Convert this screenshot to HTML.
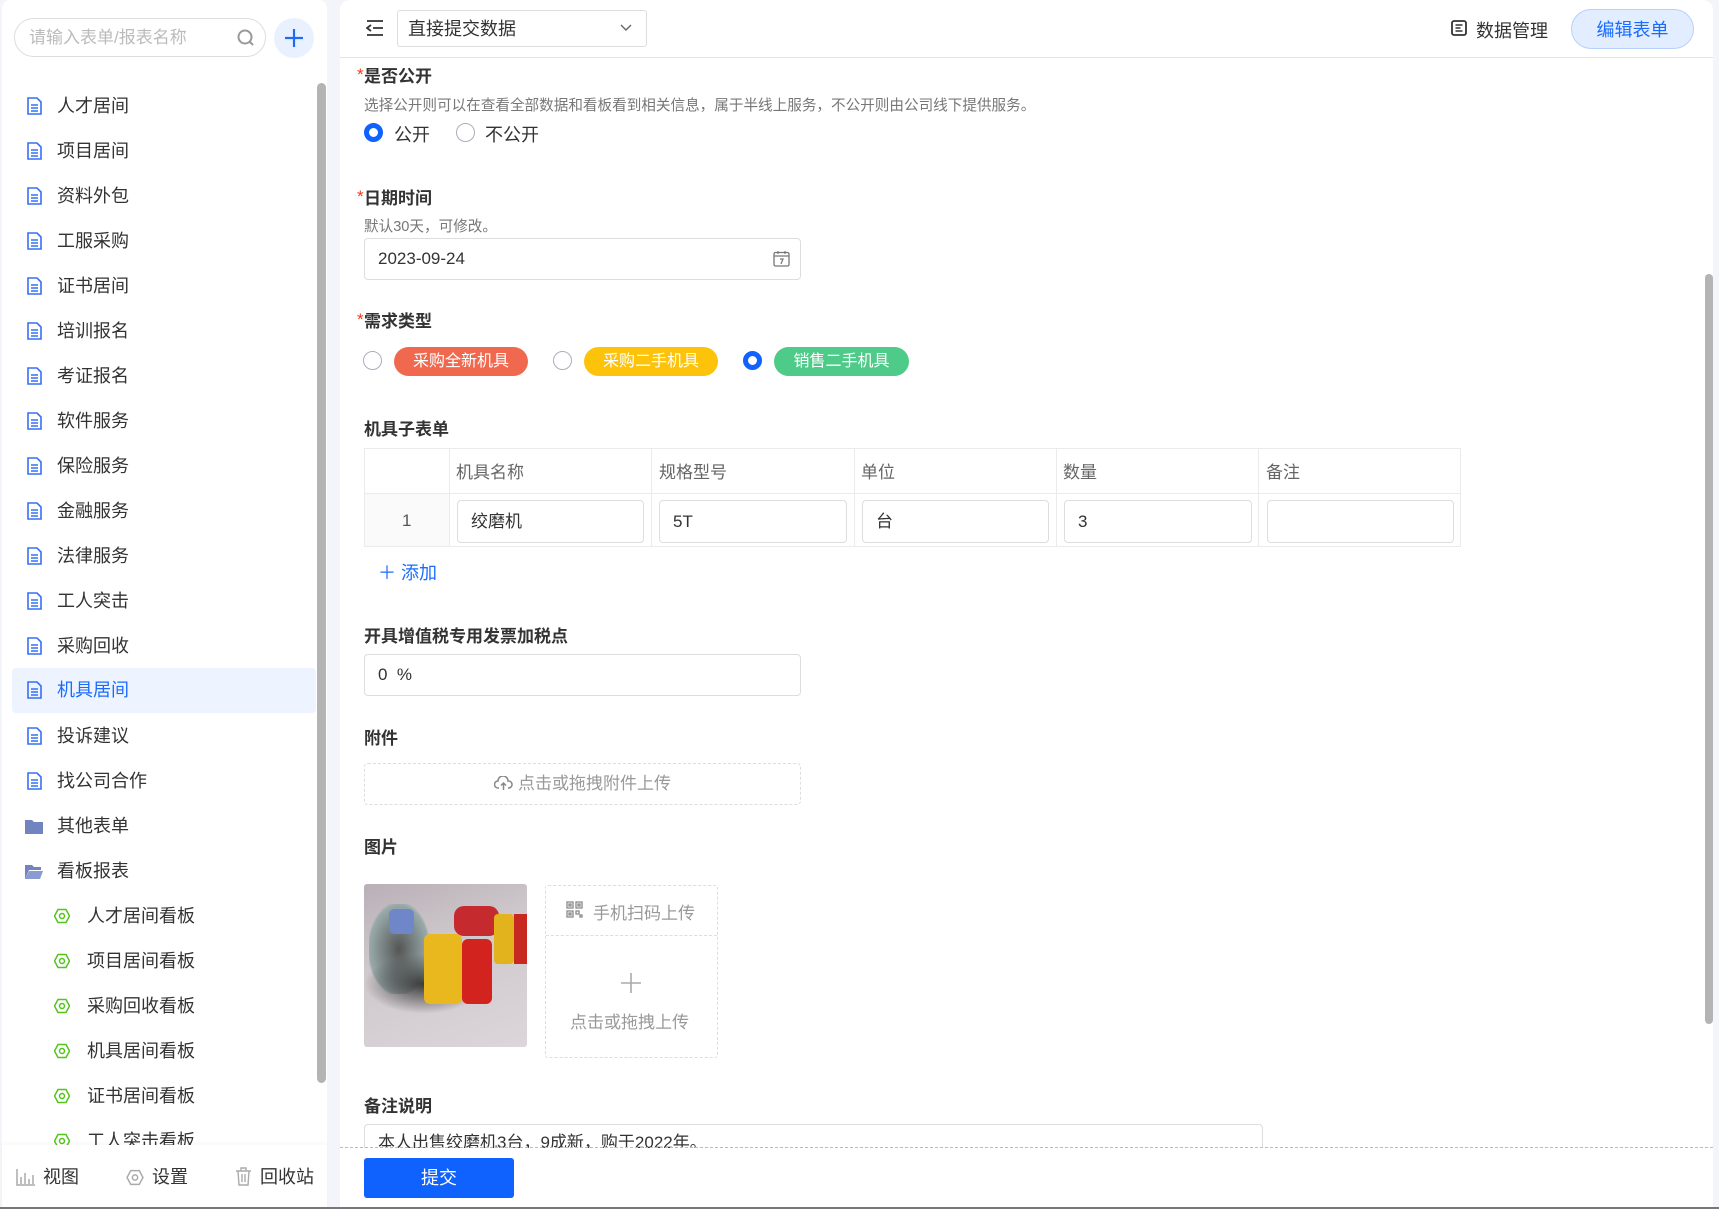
<!DOCTYPE html>
<html><head><meta charset="utf-8"><style>
*{box-sizing:border-box;margin:0;padding:0}
body{width:1719px;height:1209px;overflow:hidden;background:#f4f5fa;font-family:"Liberation Sans","Noto Sans CJK SC",sans-serif;color:#333;position:relative}
.a{position:absolute}
.side{left:2px;top:0;width:325px;height:1209px;background:#fff;border-radius:8px}
.mi{position:absolute;left:12px;width:304px;height:45px;font-size:18px;line-height:45px;color:#333}
.mi .t{position:absolute;left:45px}
.mi svg{position:absolute;left:15px;top:13px}
.sub .t{left:75px}.sub svg{left:42px;top:14px}
.main{left:340px;top:0;width:1373px;height:1209px;background:#fff;border-radius:10px 10px 0 0}
.lbl{position:absolute;left:364px;font-size:17px;font-weight:bold;color:#333;line-height:20px}
.lbl i{color:#f03a17;font-style:normal;font-weight:normal;position:absolute;left:-7px;top:-2px}
.inp{position:absolute;border:1px solid #ddd;border-radius:4px;background:#fff;font-size:17px;color:#333}
.radio{position:absolute;width:19px;height:19px;border:1.5px solid #a9aebd;border-radius:50%;background:#fff}
.radio.on{border:5px solid #0f62fe}
.tag{position:absolute;height:29px;border-radius:15px;color:#fff;font-size:16px;line-height:29px;text-align:center}
.th{position:absolute;top:448px;height:45px;line-height:45px;font-size:17px;color:#666;padding-left:14px}
.cell{position:absolute;top:500px;height:43px;line-height:41px;padding-left:13px}
</style></head><body>
<div class="a side"></div>
<div class="a" style="left:14px;top:18px;width:252px;height:39px;border:1px solid #ddd;border-radius:20px;font-size:17px;line-height:37px;color:#bbb;padding-left:14px">请输入表单/报表名称</div>
<svg class="a" style="left:236px;top:28px" width="20" height="20" viewBox="0 0 20 20"><circle cx="9" cy="9" r="6.5" fill="none" stroke="#999" stroke-width="2"/><path d="M14 14l3 3" stroke="#999" stroke-width="2"/></svg>
<div class="a" style="left:274px;top:18px;width:40px;height:40px;border-radius:50%;background:#eaf1fe"></div>
<svg class="a" style="left:284px;top:28px" width="20" height="20"><path d="M10 1v18M1 10h18" stroke="#1a6cff" stroke-width="2.2"/></svg>
<div class="a" style="left:317px;top:83px;width:9px;height:1000px;background:#b4b4b4;border-radius:5px"></div>

<div class="mi" style="top:84px"><svg width="15" height="18" viewBox="0 0 15 18"><path d="M1 1h9l4 4v12H1z" fill="none" stroke="#3670f6" stroke-width="1.6"/><path d="M4 8h7M4 11h7M4 14h7" stroke="#3670f6" stroke-width="1.4"/></svg><span class="t">人才居间</span></div>
<div class="mi" style="top:129px"><svg width="15" height="18" viewBox="0 0 15 18"><path d="M1 1h9l4 4v12H1z" fill="none" stroke="#3670f6" stroke-width="1.6"/><path d="M4 8h7M4 11h7M4 14h7" stroke="#3670f6" stroke-width="1.4"/></svg><span class="t">项目居间</span></div>
<div class="mi" style="top:174px"><svg width="15" height="18" viewBox="0 0 15 18"><path d="M1 1h9l4 4v12H1z" fill="none" stroke="#3670f6" stroke-width="1.6"/><path d="M4 8h7M4 11h7M4 14h7" stroke="#3670f6" stroke-width="1.4"/></svg><span class="t">资料外包</span></div>
<div class="mi" style="top:219px"><svg width="15" height="18" viewBox="0 0 15 18"><path d="M1 1h9l4 4v12H1z" fill="none" stroke="#3670f6" stroke-width="1.6"/><path d="M4 8h7M4 11h7M4 14h7" stroke="#3670f6" stroke-width="1.4"/></svg><span class="t">工服采购</span></div>
<div class="mi" style="top:264px"><svg width="15" height="18" viewBox="0 0 15 18"><path d="M1 1h9l4 4v12H1z" fill="none" stroke="#3670f6" stroke-width="1.6"/><path d="M4 8h7M4 11h7M4 14h7" stroke="#3670f6" stroke-width="1.4"/></svg><span class="t">证书居间</span></div>
<div class="mi" style="top:309px"><svg width="15" height="18" viewBox="0 0 15 18"><path d="M1 1h9l4 4v12H1z" fill="none" stroke="#3670f6" stroke-width="1.6"/><path d="M4 8h7M4 11h7M4 14h7" stroke="#3670f6" stroke-width="1.4"/></svg><span class="t">培训报名</span></div>
<div class="mi" style="top:354px"><svg width="15" height="18" viewBox="0 0 15 18"><path d="M1 1h9l4 4v12H1z" fill="none" stroke="#3670f6" stroke-width="1.6"/><path d="M4 8h7M4 11h7M4 14h7" stroke="#3670f6" stroke-width="1.4"/></svg><span class="t">考证报名</span></div>
<div class="mi" style="top:399px"><svg width="15" height="18" viewBox="0 0 15 18"><path d="M1 1h9l4 4v12H1z" fill="none" stroke="#3670f6" stroke-width="1.6"/><path d="M4 8h7M4 11h7M4 14h7" stroke="#3670f6" stroke-width="1.4"/></svg><span class="t">软件服务</span></div>
<div class="mi" style="top:444px"><svg width="15" height="18" viewBox="0 0 15 18"><path d="M1 1h9l4 4v12H1z" fill="none" stroke="#3670f6" stroke-width="1.6"/><path d="M4 8h7M4 11h7M4 14h7" stroke="#3670f6" stroke-width="1.4"/></svg><span class="t">保险服务</span></div>
<div class="mi" style="top:489px"><svg width="15" height="18" viewBox="0 0 15 18"><path d="M1 1h9l4 4v12H1z" fill="none" stroke="#3670f6" stroke-width="1.6"/><path d="M4 8h7M4 11h7M4 14h7" stroke="#3670f6" stroke-width="1.4"/></svg><span class="t">金融服务</span></div>
<div class="mi" style="top:534px"><svg width="15" height="18" viewBox="0 0 15 18"><path d="M1 1h9l4 4v12H1z" fill="none" stroke="#3670f6" stroke-width="1.6"/><path d="M4 8h7M4 11h7M4 14h7" stroke="#3670f6" stroke-width="1.4"/></svg><span class="t">法律服务</span></div>
<div class="mi" style="top:579px"><svg width="15" height="18" viewBox="0 0 15 18"><path d="M1 1h9l4 4v12H1z" fill="none" stroke="#3670f6" stroke-width="1.6"/><path d="M4 8h7M4 11h7M4 14h7" stroke="#3670f6" stroke-width="1.4"/></svg><span class="t">工人突击</span></div>
<div class="mi" style="top:624px"><svg width="15" height="18" viewBox="0 0 15 18"><path d="M1 1h9l4 4v12H1z" fill="none" stroke="#3670f6" stroke-width="1.6"/><path d="M4 8h7M4 11h7M4 14h7" stroke="#3670f6" stroke-width="1.4"/></svg><span class="t">采购回收</span></div>
<div class="mi" style="top:668px;background:#eef4ff;border-radius:4px;color:#1a6cff"><svg width="15" height="18" viewBox="0 0 15 18"><path d="M1 1h9l4 4v12H1z" fill="none" stroke="#3670f6" stroke-width="1.6"/><path d="M4 8h7M4 11h7M4 14h7" stroke="#3670f6" stroke-width="1.4"/></svg><span class="t">机具居间</span></div>
<div class="mi" style="top:714px"><svg width="15" height="18" viewBox="0 0 15 18"><path d="M1 1h9l4 4v12H1z" fill="none" stroke="#3670f6" stroke-width="1.6"/><path d="M4 8h7M4 11h7M4 14h7" stroke="#3670f6" stroke-width="1.4"/></svg><span class="t">投诉建议</span></div>
<div class="mi" style="top:759px"><svg width="15" height="18" viewBox="0 0 15 18"><path d="M1 1h9l4 4v12H1z" fill="none" stroke="#3670f6" stroke-width="1.6"/><path d="M4 8h7M4 11h7M4 14h7" stroke="#3670f6" stroke-width="1.4"/></svg><span class="t">找公司合作</span></div>
<div class="mi" style="top:804px"><svg width="18" height="16" viewBox="0 0 18 16" style="left:13px;top:15px"><path d="M0 1h7l2 2h9v12H0z" fill="#7284c0"/></svg><span class="t">其他表单</span></div>
<div class="mi" style="top:849px"><svg width="18" height="16" viewBox="0 0 18 16" style="left:13px;top:15px"><path d="M0 1h7l2 2h7v3H4L0 15z" fill="#7284c0"/><path d="M4 7h14l-3 8H0z" fill="#8b9ad0"/></svg><span class="t">看板报表</span></div>
<div class="mi sub" style="top:894px"><svg width="16" height="16" viewBox="0 0 16 16"><path d="M4 1.5h8l3.5 6.5-3.5 6.5H4L0.5 8z" fill="none" stroke="#52c41a" stroke-width="1.5"/><circle cx="8" cy="8" r="2.5" fill="none" stroke="#52c41a" stroke-width="1.5"/></svg><span class="t">人才居间看板</span></div>
<div class="mi sub" style="top:939px"><svg width="16" height="16" viewBox="0 0 16 16"><path d="M4 1.5h8l3.5 6.5-3.5 6.5H4L0.5 8z" fill="none" stroke="#52c41a" stroke-width="1.5"/><circle cx="8" cy="8" r="2.5" fill="none" stroke="#52c41a" stroke-width="1.5"/></svg><span class="t">项目居间看板</span></div>
<div class="mi sub" style="top:984px"><svg width="16" height="16" viewBox="0 0 16 16"><path d="M4 1.5h8l3.5 6.5-3.5 6.5H4L0.5 8z" fill="none" stroke="#52c41a" stroke-width="1.5"/><circle cx="8" cy="8" r="2.5" fill="none" stroke="#52c41a" stroke-width="1.5"/></svg><span class="t">采购回收看板</span></div>
<div class="mi sub" style="top:1029px"><svg width="16" height="16" viewBox="0 0 16 16"><path d="M4 1.5h8l3.5 6.5-3.5 6.5H4L0.5 8z" fill="none" stroke="#52c41a" stroke-width="1.5"/><circle cx="8" cy="8" r="2.5" fill="none" stroke="#52c41a" stroke-width="1.5"/></svg><span class="t">机具居间看板</span></div>
<div class="mi sub" style="top:1074px"><svg width="16" height="16" viewBox="0 0 16 16"><path d="M4 1.5h8l3.5 6.5-3.5 6.5H4L0.5 8z" fill="none" stroke="#52c41a" stroke-width="1.5"/><circle cx="8" cy="8" r="2.5" fill="none" stroke="#52c41a" stroke-width="1.5"/></svg><span class="t">证书居间看板</span></div>
<div class="mi sub" style="top:1119px"><svg width="16" height="16" viewBox="0 0 16 16"><path d="M4 1.5h8l3.5 6.5-3.5 6.5H4L0.5 8z" fill="none" stroke="#52c41a" stroke-width="1.5"/><circle cx="8" cy="8" r="2.5" fill="none" stroke="#52c41a" stroke-width="1.5"/></svg><span class="t">工人突击看板</span></div>
<div class="a" style="left:2px;top:1145px;width:325px;height:64px;background:#fff;font-size:18px;line-height:64px;box-shadow:0 -2px 4px rgba(0,0,0,0.03)">
<svg class="a" style="left:14px;top:24px" width="19" height="17"><path d="M1 0v16h18M5 8v7M9 4v11M13 10v5M17 6v9" stroke="#aaa" stroke-width="1.5" fill="none"/></svg><span class="a" style="left:41px;top:0">视图</span>
<svg class="a" style="left:124px;top:24px" width="18" height="17" viewBox="0 0 16 16"><path d="M4 1.5h8l3.5 6.5-3.5 6.5H4L0.5 8z" fill="none" stroke="#aaa" stroke-width="1.4"/><circle cx="8" cy="8" r="2.5" fill="none" stroke="#aaa" stroke-width="1.4"/></svg><span class="a" style="left:150px;top:0">设置</span>
<svg class="a" style="left:233px;top:22px" width="17" height="19"><path d="M1 4h15M6 4V1h5v3M3 4l1 14h9l1-14M7 7v8M10 7v8" stroke="#aaa" stroke-width="1.4" fill="none"/></svg><span class="a" style="left:258px;top:0">回收站</span>
</div>

<div class="a main"></div>
<div class="a" style="left:340px;top:57px;width:1373px;height:1px;background:#e3e3e3"></div>
<svg class="a" style="left:366px;top:19px" width="18" height="18"><path d="M1 2h16M7 9h10M1 16h16M5 6l-4 3 4 3" stroke="#333" stroke-width="1.8" fill="none"/></svg>
<div class="a" style="left:397px;top:10px;width:250px;height:37px;border:1px solid #ddd;border-radius:3px;font-size:18px;line-height:37px;padding-left:10px;color:#333">直接提交数据</div>
<svg class="a" style="left:620px;top:24px" width="12" height="8"><path d="M1 1l5 5 5-5" stroke="#666" stroke-width="1.4" fill="none"/></svg>
<svg class="a" style="left:1451px;top:20px" width="16" height="16"><rect x="1" y="1" width="14" height="14" rx="2" fill="none" stroke="#333" stroke-width="1.8"/><path d="M4.5 5h7M4.5 8h5M4.5 11h7" stroke="#333" stroke-width="1.5"/></svg>
<div class="a" style="left:1476px;top:17px;font-size:18px;color:#333">数据管理</div>
<div class="a" style="left:1571px;top:9px;width:123px;height:40px;border:1px solid #b7d0fb;background:#e2edff;border-radius:20px;color:#1a6cff;font-size:18px;line-height:40px;text-align:center">编辑表单</div>

<div class="lbl" style="top:67px"><i>*</i>是否公开</div>
<div class="a" style="left:364px;top:94px;font-size:14.6px;color:#777">选择公开则可以在查看全部数据和看板看到相关信息，属于半线上服务，不公开则由公司线下提供服务。</div>
<div class="radio on" style="left:364px;top:123px"></div><div class="a" style="left:394px;top:121px;font-size:18px">公开</div>
<div class="radio" style="left:456px;top:123px"></div><div class="a" style="left:485px;top:121px;font-size:18px">不公开</div>

<div class="lbl" style="top:189px"><i>*</i>日期时间</div>
<div class="a" style="left:364px;top:215px;font-size:14.6px;color:#777">默认30天，可修改。</div>
<div class="inp" style="left:364px;top:238px;width:437px;height:42px;line-height:40px;padding-left:13px">2023-09-24</div>
<svg class="a" style="left:773px;top:250px" width="17" height="17"><rect x="1" y="2.5" width="15" height="13.5" rx="1.5" fill="none" stroke="#777" stroke-width="1.3"/><path d="M1 6h15M5 1v3M12 1v3M7 9h3l-2 5" stroke="#777" stroke-width="1.2" fill="none"/></svg>

<div class="lbl" style="top:312px"><i>*</i>需求类型</div>
<div class="radio" style="left:363px;top:351px"></div>
<div class="tag" style="left:394px;top:347px;width:134px;background:#f0694e">采购全新机具</div>
<div class="radio" style="left:553px;top:351px"></div>
<div class="tag" style="left:584px;top:347px;width:134px;background:#fcc30a">采购二手机具</div>
<div class="radio on" style="left:743px;top:351px"></div>
<div class="tag" style="left:774px;top:347px;width:135px;background:#4ecb88">销售二手机具</div>

<div class="lbl" style="top:420px">机具子表单</div>
<div class="a" style="left:364px;top:448px;width:1097px;height:99px;border:1px solid #ebebeb"></div>
<div class="a" style="left:365px;top:493px;width:84px;height:53px;background:#fafafa"></div>
<div class="a" style="left:364px;top:493px;width:1097px;height:1px;background:#ebebeb"></div>
<div class="a" style="left:449px;top:448px;width:1px;height:99px;background:#ebebeb"></div>
<div class="a" style="left:651px;top:448px;width:1px;height:99px;background:#ebebeb"></div>
<div class="a" style="left:854px;top:448px;width:1px;height:99px;background:#ebebeb"></div>
<div class="a" style="left:1056px;top:448px;width:1px;height:99px;background:#ebebeb"></div>
<div class="a" style="left:1258px;top:448px;width:1px;height:99px;background:#ebebeb"></div>
<div class="th" style="left:442px;top:450px">机具名称</div>
<div class="th" style="left:645px;top:450px">规格型号</div>
<div class="th" style="left:847px;top:450px">单位</div>
<div class="th" style="left:1049px;top:450px">数量</div>
<div class="th" style="left:1252px;top:450px">备注</div>
<div class="a" style="left:402px;top:511px;font-size:17px;color:#555">1</div>
<div class="inp cell" style="left:457px;width:187px">绞磨机</div>
<div class="inp cell" style="left:659px;width:188px">5T</div>
<div class="inp cell" style="left:862px;width:187px">台</div>
<div class="inp cell" style="left:1064px;width:188px">3</div>
<div class="inp cell" style="left:1267px;width:187px"></div>
<div class="a" style="left:378px;top:559px;font-size:18px;color:#1a6cff">＋ 添加</div>

<div class="lbl" style="top:627px">开具增值税专用发票加税点</div>
<div class="inp" style="left:364px;top:654px;width:437px;height:42px;line-height:40px;padding-left:13px">0&nbsp;&nbsp;%</div>

<div class="lbl" style="top:729px">附件</div>
<div class="a" style="left:364px;top:763px;width:437px;height:42px;border:1px dashed #ddd;border-radius:4px;text-align:center;line-height:40px;font-size:17px;color:#999"><svg width="19" height="15" viewBox="0 0 19 15" style="vertical-align:-2px;margin-right:5px"><path d="M5 12H4a3.5 3.5 0 0 1 0-7 5 5 0 0 1 10 0 3.5 3.5 0 0 1 1 7h-1M9.5 14V7M7 9.5l2.5-2.5 2.5 2.5" fill="none" stroke="#888" stroke-width="1.5"/></svg>点击或拖拽附件上传</div>

<div class="lbl" style="top:838px">图片</div>
<div class="a" style="left:364px;top:884px;width:163px;height:163px;border-radius:3px;overflow:hidden;background:linear-gradient(160deg,#b8b0b6 0%,#cfc8cc 40%,#dcd6da 100%)">
<div class="a" style="left:5px;top:20px;width:60px;height:90px;background:radial-gradient(#555,#9aa 70%,transparent 75%)"></div>
<div class="a" style="left:0;top:70px;width:120px;height:60px;background:radial-gradient(#3a3a3a,transparent 70%)"></div>
<div class="a" style="left:60px;top:50px;width:38px;height:70px;background:#e9b81e;border-radius:6px"></div>
<div class="a" style="left:98px;top:55px;width:30px;height:65px;background:#d3231e;border-radius:6px"></div>
<div class="a" style="left:90px;top:22px;width:45px;height:30px;background:#c42a2e;border-radius:10px"></div>
<div class="a" style="left:130px;top:30px;width:20px;height:50px;background:#e2b31c;border-radius:4px"></div>
<div class="a" style="left:150px;top:30px;width:13px;height:50px;background:#c7281f"></div>
<div class="a" style="left:25px;top:25px;width:25px;height:25px;background:#6f86c8;border-radius:5px"></div>
</div>
<div class="a" style="left:545px;top:885px;width:173px;height:173px;border:1px dashed #ddd;border-radius:3px"></div>
<div class="a" style="left:546px;top:935px;width:171px;height:0;border-top:1px dashed #ddd"></div>
<svg class="a" style="left:566px;top:901px" width="17" height="17"><path d="M1 1h6v6H1zM10 1h6v6h-6zM1 10h6v6H1zM10 10h3v3h-3zM14 14h2v2h-2zM3 3h2v2H3zM12 3h2v2h-2zM3 12h2v2H3z" fill="none" stroke="#888" stroke-width="1.3"/></svg>
<div class="a" style="left:593px;top:899px;font-size:17px;color:#999">手机扫码上传</div>
<svg class="a" style="left:621px;top:973px" width="20" height="20"><path d="M10 0v20M0 10h20" stroke="#aaa" stroke-width="1.6"/></svg>
<div class="a" style="left:570px;top:1008px;font-size:17px;color:#999">点击或拖拽上传</div>

<div class="lbl" style="top:1097px">备注说明</div>
<div class="a" style="left:364px;top:1124px;width:899px;height:24px;border:1px solid #ddd;border-bottom:none;border-radius:4px 4px 0 0;overflow:hidden;font-size:17px;padding:8px 0 0 13px;line-height:20px">本人出售绞磨机3台，9成新，购于2022年。</div>
<div class="a" style="left:340px;top:1147px;width:1373px;height:0;border-top:1px dashed #bbb"></div>
<div class="a" style="left:340px;top:1148px;width:1373px;height:61px;background:#fff"></div>
<div class="a" style="left:364px;top:1158px;width:150px;height:40px;background:#0f62fe;border-radius:3px;color:#fff;font-size:18px;line-height:40px;text-align:center">提交</div>
<div class="a" style="left:1705px;top:274px;width:8px;height:750px;background:#b4b4b4;border-radius:4px"></div>
<div class="a" style="left:0;top:1207px;width:1719px;height:2px;background:#777"></div>
</body></html>
